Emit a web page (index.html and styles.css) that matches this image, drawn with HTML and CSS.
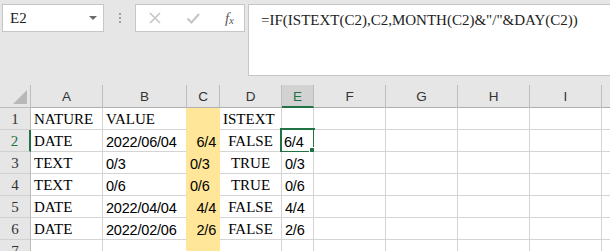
FILE: index.html
```html
<!DOCTYPE html>
<html>
<head>
<meta charset="utf-8">
<link rel="stylesheet" href="styles.css">
</head>
<body>
<div class="topbar">
  <div class="namebox"><span class="nb-text">E2</span><span class="nb-arrow"></span></div>
  <div class="dots"><i></i><i></i><i></i></div>
  <div class="btnbox">
    <svg class="ico" width="14" height="14" viewBox="0 0 14 14"><path d="M2 2 L12 12 M12 2 L2 12" stroke="#c6c6c6" stroke-width="1.6" fill="none"/></svg>
    <svg class="ico" width="14" height="14" viewBox="0 0 14 14"><path d="M1.5 7.5 L5.5 11.5 L13 3" stroke="#c6c6c6" stroke-width="2.2" fill="none"/></svg>
    <span class="fx">f<sub>x</sub></span>
  </div>
  <div class="formula">=IF(ISTEXT(C2),C2,MONTH(C2)&amp;"/"&amp;DAY(C2))</div>
</div>
<div class="sheet">
  <div class="corner"><span class="tri"></span></div>
  <div class="ch">A</div><div class="ch">B</div><div class="ch">C</div><div class="ch">D</div><div class="ch sel">E</div><div class="ch">F</div><div class="ch">G</div><div class="ch">H</div><div class="ch">I</div><div class="ch last"></div>

  <div class="rh">1</div>
  <div class="c t">NATURE</div><div class="c t pre">VALUE</div><div class="c y"></div><div class="c t">ISTEXT</div><div class="c"></div><div class="c"></div><div class="c"></div><div class="c"></div><div class="c"></div><div class="c last"></div>

  <div class="rh sel">2</div>
  <div class="c t">DATE</div><div class="c n pre">2022/06/04</div><div class="c y n r">6/4</div><div class="c t m">FALSE</div><div class="c n active">6/4<span class="handle"></span></div><div class="c"></div><div class="c"></div><div class="c"></div><div class="c"></div><div class="c last"></div>

  <div class="rh">3</div>
  <div class="c t">TEXT</div><div class="c n pre">0/3</div><div class="c y n">0/3</div><div class="c t m">TRUE</div><div class="c n">0/3</div><div class="c"></div><div class="c"></div><div class="c"></div><div class="c"></div><div class="c last"></div>

  <div class="rh">4</div>
  <div class="c t">TEXT</div><div class="c n pre">0/6</div><div class="c y n">0/6</div><div class="c t m">TRUE</div><div class="c n">0/6</div><div class="c"></div><div class="c"></div><div class="c"></div><div class="c"></div><div class="c last"></div>

  <div class="rh">5</div>
  <div class="c t">DATE</div><div class="c n pre">2022/04/04</div><div class="c y n r">4/4</div><div class="c t m">FALSE</div><div class="c n">4/4</div><div class="c"></div><div class="c"></div><div class="c"></div><div class="c"></div><div class="c last"></div>

  <div class="rh">6</div>
  <div class="c t">DATE</div><div class="c n pre">2022/02/06</div><div class="c y n r">2/6</div><div class="c t m">FALSE</div><div class="c n">2/6</div><div class="c"></div><div class="c"></div><div class="c"></div><div class="c"></div><div class="c last"></div>

  <div class="rh">7</div>
  <div class="c"></div><div class="c pre"></div><div class="c y"></div><div class="c"></div><div class="c"></div><div class="c"></div><div class="c"></div><div class="c"></div><div class="c"></div><div class="c last"></div>
</div>
</body>
</html>
```
FILE: styles.css
```css
* { box-sizing: border-box; }
html, body { margin: 0; padding: 0; }
body {
  width: 610px;
  height: 251px;
  overflow: hidden;
  background: #e6e6e6;
  font-family: "Liberation Sans", Arial, sans-serif;
}
.topbar {
  height: 85px;
  display: flex;
  align-items: flex-start;
  padding: 4px 0 0 2px;
}
.namebox {
  width: 102px;
  height: 28px;
  background: #fff;
  border: 1px solid #c6c6c6;
  display: flex;
  align-items: center;
  justify-content: space-between;
  padding: 0 6px 0 7px;
}
.nb-text {
  font-family: "Liberation Serif", serif;
  font-size: 15px;
  color: #222;
  padding-top: 1px;
}
.nb-arrow {
  width: 0; height: 0;
  border-left: 4px solid transparent;
  border-right: 4px solid transparent;
  border-top: 4px solid #6a6a6a;
}
.dots {
  width: 31px;
  height: 28px;
  display: flex;
  flex-direction: column;
  align-items: center;
  justify-content: center;
  gap: 2px;
}
.dots i {
  display: block;
  width: 2px;
  height: 2px;
  background: #a0a0a0;
}
.btnbox {
  width: 110px;
  height: 28px;
  background: #fff;
  border: 1px solid #c6c6c6;
  display: flex;
  align-items: center;
  justify-content: space-between;
  padding: 0 10px 0 12px;
}
.fx {
  font-family: "Liberation Serif", serif;
  font-style: italic;
  font-size: 15px;
  color: #5a5a5a;
  line-height: 1;
}
.fx sub { font-size: 11px; vertical-align: -1px; }
.formula {
  margin-left: 3px;
  flex: 1;
  height: 72px;
  background: #fff;
  border: 1px solid #c6c6c6;
  border-right: none;
  padding: 6px 0 0 12px;
  font-family: "Liberation Serif", serif;
  font-size: 15px;
  color: #222;
  line-height: 18px;
}
.sheet {
  display: grid;
  grid-template-columns: 31px 72px 84px 33px 62px 32px 72px 72px 72px 72px 1fr;
  grid-template-rows: 23px repeat(7, 22px);
}
.corner {
  border-right: 1px solid #bdbdbd;
  border-bottom: 1px solid #bdbdbd;
  display: flex;
  align-items: flex-end;
  justify-content: flex-end;
  padding: 0 3px 3px 0;
}
.tri {
  width: 0; height: 0;
  border-left: 14px solid transparent;
  border-bottom: 14px solid #b8b8b8;
}
.ch {
  border-right: 1px solid #bdbdbd;
  border-bottom: 1px solid #b0b0b0;
  display: flex;
  align-items: center;
  justify-content: center;
  font-size: 13.5px;
  color: #333;
  padding-top: 1px;
}
.ch.sel {
  background: #d2d2d2;
  color: #217346;
  border-bottom: 2px solid #217346;
}
.ch.last { border-right: none; }
.rh {
  border-right: 1px solid #bdbdbd;
  border-bottom: 1px solid #d0d0d0;
  display: flex;
  align-items: center;
  justify-content: center;
  font-family: "Liberation Serif", serif;
  font-size: 15px;
  color: #333;
  padding-top: 2px;
}
.rh.sel {
  color: #217346;
  border-right: 2px solid #217346;
}
.c {
  background: #fff;
  border-right: 1px solid #d4d4d4;
  border-bottom: 1px solid #d4d4d4;
  display: flex;
  align-items: center;
  padding: 2px 2px 0 3px;
  white-space: nowrap;
  color: #000;
  position: relative;
}
.c.last { border-right: none; }
.c.t {
  font-family: "Liberation Serif", serif;
  font-size: 15px;
}
.c.n {
  font-size: 14.5px;
  letter-spacing: -0.2px;
}
.c.m { justify-content: center; padding-left: 2px; }
.c.r { justify-content: flex-end; padding-right: 3px; }
.c.pre { border-right-color: #ffe699; }
.c.y {
  background: #ffe699;
  border-right-color: #ffe699;
  border-bottom-color: #ffe699;
}
.c.active {
  padding-left: 2px;
}
.c.active::before {
  content: "";
  position: absolute;
  left: -2px;
  top: -2px;
  right: -2px;
  bottom: -2px;
  border: 2px solid #217346;
}
.handle {
  position: absolute;
  right: -4px;
  bottom: -3px;
  width: 6px;
  height: 5px;
  background: #217346;
  border: 1px solid #fff;
  box-sizing: content-box;
}
```
